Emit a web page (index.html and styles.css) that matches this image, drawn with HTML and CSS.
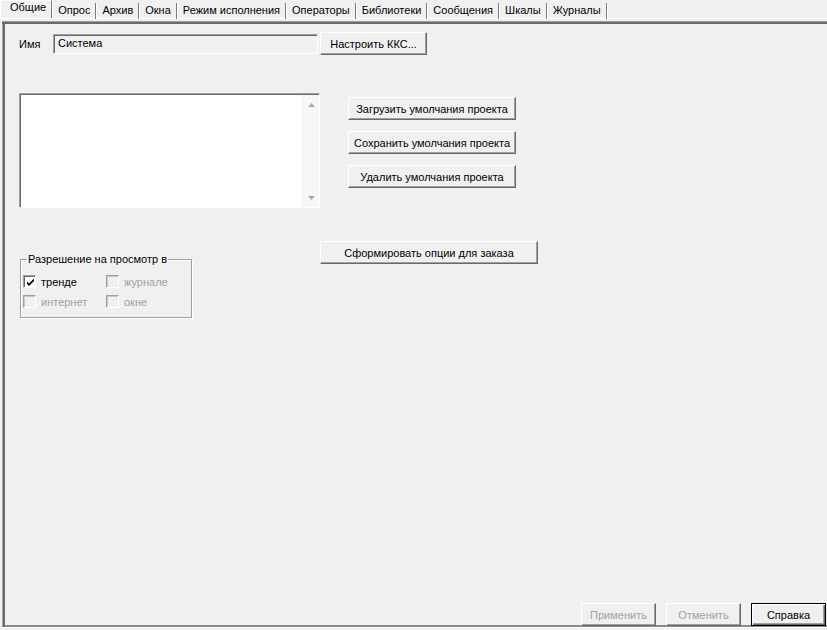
FILE: index.html
```html
<!DOCTYPE html>
<html>
<head>
<meta charset="utf-8">
<link rel="stylesheet" href="styles.css">
</head>
<body>
<div class="tabs">
  <div class="tab active">Общие</div>
  <div class="tab">Опрос</div>
  <div class="tab">Архив</div>
  <div class="tab">Окна</div>
  <div class="tab">Режим исполнения</div>
  <div class="tab">Операторы</div>
  <div class="tab">Библиотеки</div>
  <div class="tab">Сообщения</div>
  <div class="tab">Шкалы</div>
  <div class="tab">Журналы</div>
</div>
<div class="panel">
  <div class="row-name">
    <span class="lbl">Имя</span>
    <div class="field">Система</div>
    <button class="btn btn-kks">Настроить ККС...</button>
  </div>
  <div class="row-list">
    <div class="listbox">
      <div class="list-body"></div>
      <div class="scroll">
        <svg class="arr" width="7" height="4" viewBox="0 0 7 4"><path d="M0 4 L3.5 0 L7 4 Z" fill="#a8a8a8"/></svg>
        <svg class="arr" width="7" height="4" viewBox="0 0 7 4"><path d="M0 0 L3.5 4 L7 0 Z" fill="#a8a8a8"/></svg>
      </div>
    </div>
    <div class="defaults">
      <button class="btn btn-def">Загрузить умолчания проекта</button>
      <button class="btn btn-def">Сохранить умолчания проекта</button>
      <button class="btn btn-def">Удалить умолчания проекта</button>
    </div>
  </div>
  <div class="row-group">
    <div class="group-col">
      <fieldset class="group">
        <legend>Разрешение на просмотр в</legend>
        <div class="checks">
          <label class="chk"><span class="box on"><svg width="9" height="9" viewBox="0 0 9 9"><path d="M1 3.5 L3 5.5 L8 0.5 L8 3 L3 8 L1 6 Z" fill="#000"/></svg></span>тренде</label>
          <label class="chk dis"><span class="box"></span>журнале</label>
          <label class="chk dis"><span class="box"></span>интернет</label>
          <label class="chk dis"><span class="box"></span>окне</label>
        </div>
      </fieldset>
    </div>
    <button class="btn btn-order">Сформировать опции для заказа</button>
  </div>
  <div class="footer">
    <button class="btn btn-foot disabled">Применить</button>
    <button class="btn btn-foot disabled">Отменить</button>
    <button class="btn btn-foot default">Справка</button>
  </div>
</div>
</body>
</html>
```
FILE: styles.css
```css
html, body {
  margin: 0;
  padding: 0;
  width: 827px;
  height: 630px;
  overflow: hidden;
  background: #f0f0f0;
  font-family: "Liberation Sans", Arial, sans-serif;
  font-size: 11px;
  color: #000;
}

.tabs {
  display: flex;
  height: 19px;
  border-bottom: 1px solid #ffffff;
  box-sizing: border-box;
  padding-top: 3px;
}

.tab {
  height: 16px;
  line-height: 15px;
  padding: 0 5px 0 6px;
  border-right: 1px solid #7a7a7a;
  box-shadow: 1px 0 0 #ffffff;
  white-space: nowrap;
}

.tab.active {
  margin-top: -3px;
  height: 18px;
  line-height: 13px;
  padding: 0 5px 0 9px;
  border-left: 1px solid #ffffff;
  border-top: 1px solid #ffffff;
  box-sizing: border-box;
}

.panel {
  margin-top: 2px;
  margin-left: 2px;
  height: 607px;
  box-sizing: border-box;
  padding: 11px 0 1px 17px;
  box-shadow: inset 0 1px #a0a0a0, inset 0 3px #6a6a6a,
              inset 1px 0 #a0a0a0, inset 3px 0 #6a6a6a,
              inset 0 -2px #8a8a8a;
  display: flex;
  flex-direction: column;
  border-bottom: 1px solid #ffffff;
}

.btn {
  font-family: inherit;
  font-size: 11px;
  color: #000;
  background: #f0f0f0;
  margin: 0;
  padding: 0;
  height: 23px;
  box-sizing: border-box;
  border: 1px solid;
  border-color: #ffffff #696969 #696969 #ffffff;
  box-shadow: inset -1px -1px 0 #a0a0a0;
  white-space: nowrap;
}

.row-name {
  display: flex;
  align-items: center;
  height: 23px;
}

.lbl {
  width: 34px;
}

.field {
  width: 265px;
  height: 20px;
  box-sizing: border-box;
  border-top: 1px solid #a0a0a0;
  border-left: 1px solid #a0a0a0;
  border-right: 1px solid #ffffff;
  border-bottom: 1px solid #ffffff;
  box-shadow: inset 1px 1px 0 #696969;
  padding: 1px 0 0 4px;
  line-height: 14px;
}

.btn-kks {
  width: 107px;
  margin-left: 2px;
}

.row-list {
  display: flex;
  margin-top: 38px;
}

.listbox {
  width: 301px;
  height: 115px;
  box-sizing: border-box;
  background: #ffffff;
  border-top: 1px solid #a0a0a0;
  border-left: 1px solid #a0a0a0;
  border-right: 1px solid #ffffff;
  border-bottom: 1px solid #ffffff;
  box-shadow: inset 1px 1px 0 #696969;
  display: flex;
  padding: 1px 0 0 1px;
}

.list-body {
  flex: 1;
}

.scroll {
  width: 16px;
  background: #f7f7f7;
  border-left: 1px solid #f0f0f0;
  display: flex;
  flex-direction: column;
  justify-content: space-between;
  align-items: center;
  padding: 8px 0 7px;
}

.arr {
  display: block;
}

.defaults {
  display: flex;
  flex-direction: column;
  gap: 11px;
  margin: 4px 0 0 28px;
}

.btn-def {
  width: 168px;
}

.row-group {
  display: flex;
  margin-top: 33px;
}

.group-col {
  width: 301px;
}

.group {
  margin: 12px 0 0 1px;
  width: 172px;
  height: 65px;
  box-sizing: border-box;
  border: 1px solid #a0a0a0;
  box-shadow: 1px 1px 0 #ffffff, inset 1px 1px 0 #ffffff;
  padding: 0 0 0 2px;
  min-width: 0;
}

.group legend {
  padding: 0 1px;
  margin-left: 4px;
  line-height: 13px;
}

.checks {
  display: grid;
  grid-template-columns: 83px 70px;
  row-gap: 7px;
  margin-top: 9px;
}

.chk {
  display: flex;
  align-items: center;
  height: 13px;
  white-space: nowrap;
}

.chk.dis {
  color: #a0a0a0;
}

.box {
  width: 13px;
  height: 13px;
  box-sizing: border-box;
  border-top: 1px solid #a0a0a0;
  border-left: 1px solid #a0a0a0;
  border-right: 1px solid #ffffff;
  border-bottom: 1px solid #ffffff;
  box-shadow: inset 1px 1px 0 #c8c8c8;
  background: #f0f0f0;
  margin-right: 5px;
  display: flex;
  align-items: center;
  justify-content: center;
}

.box.on {
  background: #ffffff;
  box-shadow: inset 1px 1px 0 #696969;
}

.box.on svg {
  margin: 1px 0 0 1px;
}

.btn-order {
  width: 218px;
}

.footer {
  margin-top: auto;
  display: flex;
  justify-content: flex-end;
  gap: 10px;
  padding-right: 1px;
}

.btn-foot {
  width: 75px;
}

.btn-foot.disabled {
  color: #a0a0a0;
}

.btn-foot.default {
  border: 1px solid #000000;
  box-shadow: inset 1px 1px 0 #ffffff, inset -1px -1px 0 #696969, inset -2px -2px 0 #a0a0a0;
}
```
